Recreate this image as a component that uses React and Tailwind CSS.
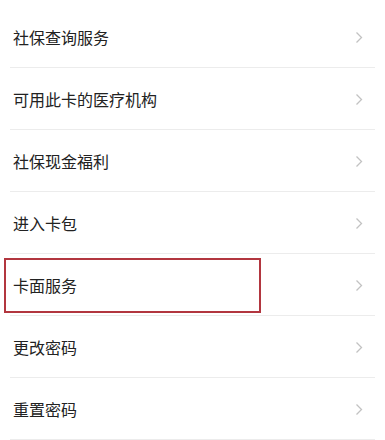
export default function App() {
  const items = [
    "社保查询服务",
    "可用此卡的医疗机构",
    "社保现金福利",
    "进入卡包",
    "卡面服务",
    "更改密码",
    "重置密码",
  ];

  return (
    <div
      className="w-[385px] h-[440px] bg-white overflow-hidden pt-[6px]"
      style={{ fontFamily: '"Noto Sans CJK SC", "Liberation Sans", sans-serif' }}
    >
      {items.map((item, i) => (
        <div
          key={item}
          className="relative mx-[10px] h-[62px] border-b border-[#ececec] flex items-center justify-between pt-[1px]"
        >
          {/* red highlight around the selected row */}
          {i === 4 && (
            <div className="absolute left-[-6px] top-[4px] w-[257px] h-[55px] border-2 border-[#b2363f]" />
          )}
          <span className="pl-[3px] text-[16px] text-[#222]">{item}</span>
          <svg width="8" height="13" viewBox="0 0 8 13" className="mr-[12px]">
            <path d="M1.5 1.5 L6.5 6.5 L1.5 11.5" fill="none" stroke="#c2c2c2" strokeWidth="1.3" />
          </svg>
        </div>
      ))}
    </div>
  );
}
